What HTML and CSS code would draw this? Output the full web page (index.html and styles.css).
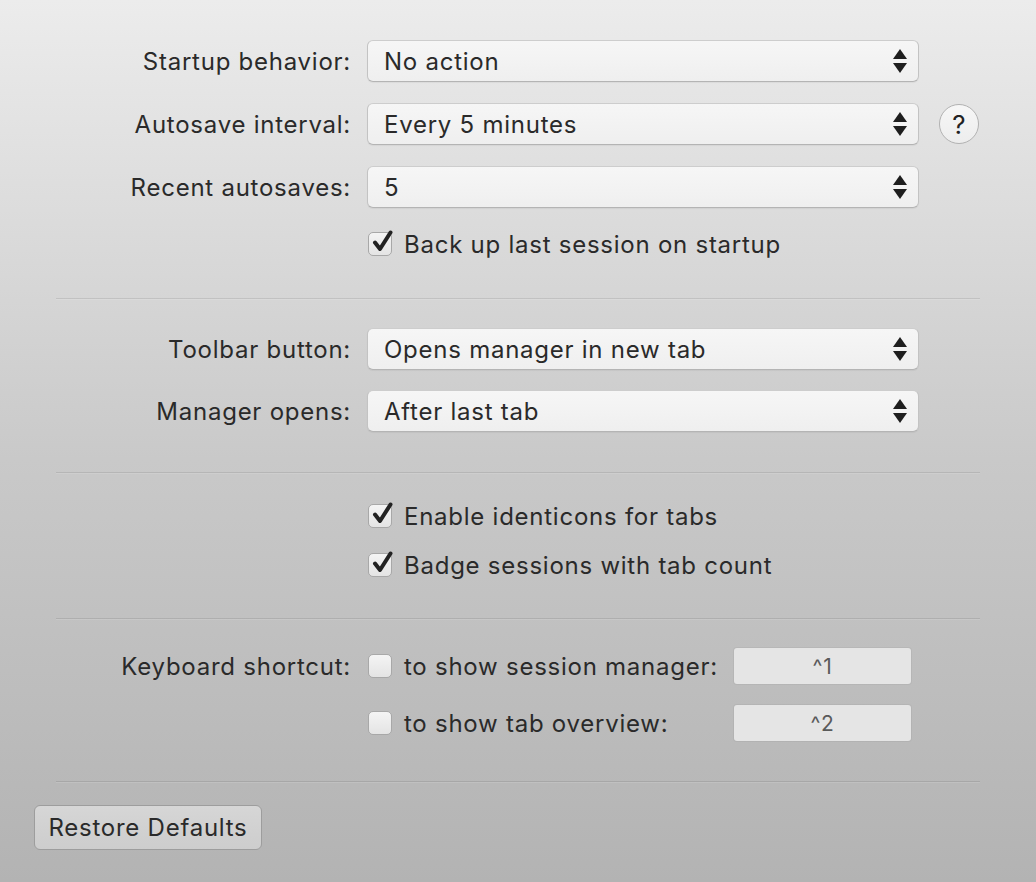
FILE: index.html
```html
<!DOCTYPE html>
<html>
<head>
<meta charset="utf-8">
<link rel="stylesheet" href="styles.css">
</head>
<body>
<div class="pane">
  <section class="section first">
    <div class="row">
      <div class="label">Startup behavior:</div>
      <div class="select"><span>No action</span><svg class="arrows" viewBox="0 0 14 24" width="14" height="24"><polygon points="0,10 7,0 14,10"/><polygon points="0,14 14,14 7,24"/></svg></div>
    </div>
    <div class="row">
      <div class="label">Autosave interval:</div>
      <div class="select"><span>Every 5 minutes</span><svg class="arrows" viewBox="0 0 14 24" width="14" height="24"><polygon points="0,10 7,0 14,10"/><polygon points="0,14 14,14 7,24"/></svg></div>
      <div class="help">?</div>
    </div>
    <div class="row">
      <div class="label">Recent autosaves:</div>
      <div class="select"><span>5</span><svg class="arrows" viewBox="0 0 14 24" width="14" height="24"><polygon points="0,10 7,0 14,10"/><polygon points="0,14 14,14 7,24"/></svg></div>
    </div>
    <div class="row check-row">
      <div class="label"></div>
      <label class="check"><span class="box checked"><svg viewBox="0 0 24 24" width="24" height="24"><path d="M5 12.5 L10 19 L20.5 2.5" fill="none" stroke="#222" stroke-width="4" stroke-linecap="round" stroke-linejoin="round"/></svg></span>Back up last session on startup</label>
    </div>
  </section>
  <div class="sep"></div>
  <section class="section">
    <div class="row">
      <div class="label">Toolbar button:</div>
      <div class="select"><span>Opens manager in new tab</span><svg class="arrows" viewBox="0 0 14 24" width="14" height="24"><polygon points="0,10 7,0 14,10"/><polygon points="0,14 14,14 7,24"/></svg></div>
    </div>
    <div class="row">
      <div class="label">Manager opens:</div>
      <div class="select"><span>After last tab</span><svg class="arrows" viewBox="0 0 14 24" width="14" height="24"><polygon points="0,10 7,0 14,10"/><polygon points="0,14 14,14 7,24"/></svg></div>
    </div>
  </section>
  <div class="sep"></div>
  <section class="section checks">
    <div class="row check-row">
      <div class="label"></div>
      <label class="check"><span class="box checked"><svg viewBox="0 0 24 24" width="24" height="24"><path d="M5 12.5 L10 19 L20.5 2.5" fill="none" stroke="#222" stroke-width="4" stroke-linecap="round" stroke-linejoin="round"/></svg></span>Enable identicons for tabs</label>
    </div>
    <div class="row check-row">
      <div class="label"></div>
      <label class="check"><span class="box checked"><svg viewBox="0 0 24 24" width="24" height="24"><path d="M5 12.5 L10 19 L20.5 2.5" fill="none" stroke="#222" stroke-width="4" stroke-linecap="round" stroke-linejoin="round"/></svg></span>Badge sessions with tab count</label>
    </div>
  </section>
  <div class="sep"></div>
  <section class="section shortcuts">
    <div class="row sc-row">
      <div class="label">Keyboard shortcut:</div>
      <label class="check sc-label"><span class="box"></span>to show session manager:</label>
      <div class="key">^1</div>
    </div>
    <div class="row sc-row">
      <div class="label"></div>
      <label class="check sc-label"><span class="box"></span>to show tab overview:</label>
      <div class="key">^2</div>
    </div>
  </section>
  <div class="sep"></div>
  <div class="footer">
    <button class="btn">Restore Defaults</button>
  </div>
</div>
</body>
</html>
```

FILE: styles.css
```css
html, body {
  margin: 0;
  padding: 0;
  height: 100%;
}
body {
  background: linear-gradient(to bottom, #ececec 0%, #c9c9c9 52%, #b3b3b3 100%);
  font-family: "Inter", "Noto Sans", sans-serif;
  font-size: 24px;
  letter-spacing: 0.75px;
  color: #2a2a2a;
  width: 1036px;
  height: 882px;
  overflow: hidden;
}
.pane {
  padding-top: 40px;
}
.section {
  display: flex;
  flex-direction: column;
  gap: 20px;
  padding-top: 28px;
  padding-bottom: 40px;
}
.section.first {
  padding-top: 0;
  gap: 21px;
  padding-bottom: 39px;
}
.checks { gap: 19px; padding-top: 27px; padding-bottom: 38px; }
.shortcuts { gap: 21px; padding-top: 28px; }
.row {
  display: flex;
  align-items: center;
  height: 42px;
}
.check-row { height: 30px; }
.sc-row { height: 36px; }
.label {
  width: 351px;
  text-align: right;
  flex: none;
  margin-right: 16px;
}
.select {
  width: 552px;
  height: 42px;
  box-sizing: border-box;
  border: 1px solid #c3c3c3;
  border-top-color: #cdcdcd;
  border-bottom-color: #b4b4b4;
  border-radius: 6px;
  background: linear-gradient(to bottom, #f6f6f6, #efefef);
  display: flex;
  align-items: center;
  justify-content: space-between;
  padding: 1px 11px 0 16px;
  box-shadow: 0 1px 1px rgba(0,0,0,0.05);
}
.arrows { margin-top: -1px; }
.arrows polygon { fill: #1e1e1e; }
.help {
  width: 40px;
  height: 40px;
  box-sizing: border-box;
  border-radius: 50%;
  border: 1px solid #b2b2b2;
  background: linear-gradient(to bottom, #f7f7f7, #ededed);
  margin-left: 20px;
  display: flex;
  align-items: center;
  justify-content: center;
  font-size: 26px;
  font-weight: 400;
  letter-spacing: 0;
  color: #222;
}
.check {
  display: flex;
  align-items: center;
}
.box {
  width: 24px;
  height: 24px;
  box-sizing: border-box;
  border: 1px solid #a8a8a8;
  border-radius: 5px;
  background: linear-gradient(to bottom, #f4f4f4, #e4e4e4);
  margin: 0 12px 0 1px;
  position: relative;
  flex: none;
}
.box svg {
  position: absolute;
  left: 1px;
  top: -3px;
}
.sc-label { width: 367px; flex: none; }
.key {
  width: 177px;
  height: 36px;
  border-radius: 3px;
  background: #e5e5e5;
  color: #5a5a5a;
  font-size: 21px;
  display: flex;
  align-items: center;
  justify-content: center;
  box-shadow: 0 0 0 1px rgba(0,0,0,0.04);
}
.sep {
  margin: 0 56px;
  height: 0;
  border-top: 1px solid rgba(0,0,0,0.09);
  border-bottom: 1px solid rgba(255,255,255,0.12);
}
.footer {
  padding: 22px 0 0 34px;
}
.btn {
  width: 228px;
  height: 45px;
  border: 1px solid #9d9d9d;
  border-radius: 6px;
  background: linear-gradient(to bottom, #d6d6d6, #cdcdcd);
  font-family: inherit;
  font-size: 24px;
  letter-spacing: 0.75px;
  color: #2a2a2a;
  padding: 0;
}
```
